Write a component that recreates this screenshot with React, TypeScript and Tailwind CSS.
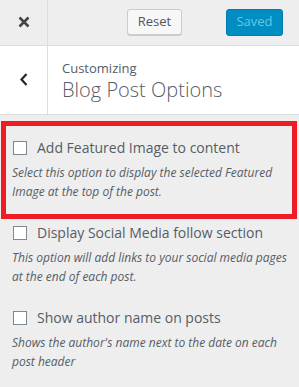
const font = { fontFamily: '"Open Sans", "Noto Sans", sans-serif' };

const options = [
  {
    label: "Add Featured Image to content",
    desc: "Select this option to display the selected Featured Image at the top of the post.",
  },
  {
    label: "Display Social Media follow section",
    desc: "This option will add links to your social media pages at the end of each post.",
  },
  {
    label: "Show author name on posts",
    desc: "Shows the author's name next to the date on each post header",
  },
];

const Option = ({ label, desc }: { label: string; desc: string }) => (
  <div className="w-[275px]">
    <label className="flex items-center h-[20px] text-[14px] leading-[20px] text-[#555d66]">
      <span className="ml-[1px] w-[14px] h-[14px] border border-[#7e8993] bg-white shrink-0" />
      <span className="ml-[10px]">{label}</span>
    </label>
    <p className="mt-[5px] text-[12px] leading-[19px] italic text-[#555d66]">{desc}</p>
  </div>
);

const App = () => {
  return (
    <div className="min-h-screen w-[299px] bg-[#eeeeee] antialiased" style={font}>
      {/* header actions */}
      <div className="flex h-[46px] border-b border-[#dddddd]">
        <button className="w-[48px] h-full border-r border-[#dddddd] flex items-center justify-center">
          <svg width="12" height="12" viewBox="0 0 12 12" className="-mt-[1px]">
            <path d="M1.5 1.5 L10.5 10.5 M10.5 1.5 L1.5 10.5" stroke="#444" strokeWidth="2.6" strokeLinecap="butt" />
          </svg>
        </button>
        <div className="flex-1 flex items-center justify-end pr-[16px] -mt-[1px]">
          <button className="w-[55px] h-[26px] rounded-[3px] border border-[#cccccc] bg-[#f7f7f7] shadow-[0_1px_0_#cccccc] text-[13px] text-[#555555]">
            Reset
          </button>
          <button className="ml-[44px] w-[57px] h-[27px] rounded-[3px] border border-[#007cb2] bg-[#008ec2] text-[13px] text-[#66c6e4]">
            Saved
          </button>
        </div>
      </div>

      {/* section title */}
      <div className="flex h-[69px] bg-white border-b border-[#dddddd]">
        <button className="w-[48px] h-full border-r border-[#dddddd] flex items-center justify-center">
          <svg width="8" height="13" viewBox="0 0 8 13" className="-mt-[2px]">
            <path d="M6.5 1 L1.5 6.5 L6.5 12" fill="none" stroke="#23282d" strokeWidth="2.2" />
          </svg>
        </button>
        <div className="pl-[14px] pt-[13px] text-[#555d66]">
          <div className="text-[13px] leading-[18px]">Customizing</div>
          <div className="text-[20px] leading-[26px] font-light">Blog Post Options</div>
        </div>
      </div>

      {/* controls */}
      <div className="pt-[6px] pb-[20px]">
        <div className="ml-[1px] w-[296px] border-[5px] border-[#ee1c25] pl-[6px] pt-[12px] pb-[13px]">
          <Option {...options[0]} />
        </div>
        <div className="pl-[12px] mt-[4px]">
          <Option {...options[1]} />
        </div>
        <div className="pl-[12px] mt-[22px]">
          <Option {...options[2]} />
        </div>
      </div>
    </div>
  );
};

export default App;
